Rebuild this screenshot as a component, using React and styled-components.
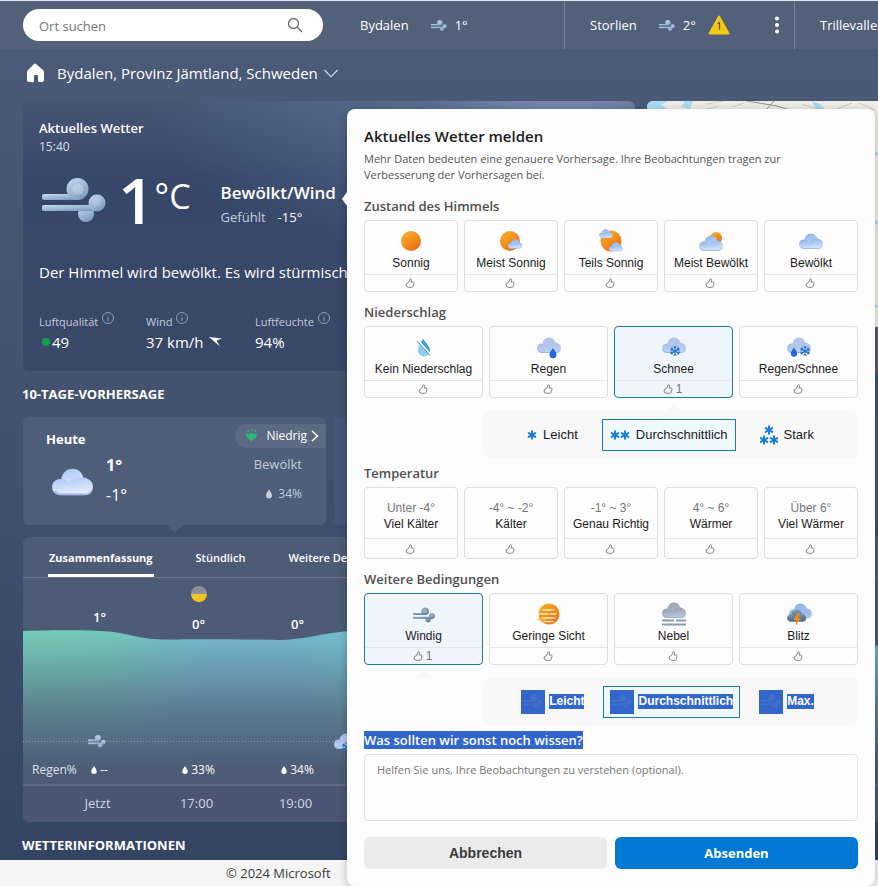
import React, { useId, useState } from 'react'
import styled, { createGlobalStyle } from 'styled-components'

const ui = '"Open Sans", "Noto Sans", sans-serif'
const plain = '"Liberation Sans", Arial, sans-serif'

const GlobalStyle = createGlobalStyle`
    * {
        box-sizing: border-box;
    }
    body {
        margin: 0;
        font-family: ${ui};
        color: #fff;
    }
    button, input, textarea {
        font: inherit;
        color: inherit;
    }
    h1, h2, h3, p {
        margin: 0;
    }
    svg {
        display: block;
        flex-shrink: 0;
    }
`

const Page = styled.div`
    position: relative;
    display: flex;
    flex-direction: column;
    min-height: 100vh;
    overflow: hidden;
    background: linear-gradient(#4b5a78 0, #4a5976 100px, #43536f 370px, #3d4e6d 560px, #344564 860px);
`

/* top bar */

const TopBar = styled.header`
    display: flex;
    height: 49px;
    background: #526079;
    border-top: 1px solid #d9e9f8;
    overflow: hidden;
`

const SearchBox = styled.label`
    display: flex;
    align-items: center;
    flex: 0 0 300px;
    height: 32px;
    margin: 8px 0 0 23px;
    padding: 0 20px 0 16px;
    border-radius: 16px;
    background: #fff;
`

const SearchInput = styled.input`
    flex: 1;
    min-width: 0;
    padding: 2px 0 0;
    border: 0;
    outline: 0;
    background: none;
    color: #444;
    font-size: 13px;
    &::placeholder {
        color: #767676;
        opacity: 1;
    }
`

const Place = styled.div`
    display: flex;
    align-items: center;
    flex: 0 0 ${props => props.$width}px;
    padding: 0 10px 0 ${props => props.$pad}px;
    border-right: 1px solid #7b879c;
    font-size: 13px;
    font-weight: 500;
    white-space: nowrap;
`

const PlaceName = styled.a`
    color: #fff;
    text-decoration: none;
    margin-right: 22px;
`

const PlaceTemp = styled.span`
    margin: 0 12px 0 8px;
`

const MoreButton = styled.button`
    margin-left: auto;
    padding: 0 4px;
    border: 0;
    background: none;
    cursor: pointer;
`

const Location = styled.button`
    display: flex;
    align-items: center;
    align-self: flex-start;
    height: 52px;
    padding: 0 0 4px 24px;
    border: 0;
    background: none;
    font-size: 15px;
    cursor: pointer;
`

const LocationName = styled.span`
    margin: 0 6px 0 11px;
`

/* current weather */

const HeroRow = styled.div`
    display: flex;
    gap: 12px;
    padding-left: 23px;
`

const Current = styled.section`
    flex: 0 0 612px;
    height: 270px;
    padding: 18px 16px;
    border-radius: 6px;
    background:
        radial-gradient(ellipse 420px 200px at 540px -20px, #8494bb 0, rgba(110, 130, 165, 0.5) 35%, rgba(110, 130, 165, 0) 100%),
        linear-gradient(#455674 0, #36476a 80px, #384867 200px, #3a4968);
`

const CurrentTitle = styled.h2`
    font-size: 13px;
    line-height: 18px;
    font-weight: 600;
`

const CurrentTime = styled.p`
    font-size: 12px;
    line-height: 20px;
    color: #d8deea;
`

const Summary = styled.div`
    display: flex;
    align-items: center;
    height: 72px;
    margin: 7px 0 24px 3px;
`

const Degrees = styled.span`
    margin-left: 12px;
    font-size: 64px;
    line-height: 72px;
    font-weight: 600;
`

const Unit = styled.span`
    align-self: flex-start;
    margin-top: 8px;
    font-size: 34px;
    line-height: 48px;
`

const Condition = styled.div`
    margin: 8px 0 0 30px;
`

const ConditionName = styled.p`
    font-size: 17px;
    line-height: 26px;
    font-weight: 600;
`

const Feels = styled.p`
    display: flex;
    gap: 12px;
    font-size: 13px;
    line-height: 22px;
    color: #c6cfde;
`

const FeelsValue = styled.span`
    color: #fff;
`

const Outlook = styled.p`
    font-size: 15px;
    line-height: 24px;
    white-space: nowrap;
`

const Stats = styled.dl`
    display: flex;
    margin: 28px 0 0;
`

const Stat = styled.div`
    flex: 0 0 ${props => props.$width}px;
`

const StatLabel = styled.dt`
    display: flex;
    gap: 4px;
    font-size: 11px;
    line-height: 20px;
    color: #c4ccdb;
`

const StatValue = styled.dd`
    display: flex;
    align-items: center;
    gap: ${props => props.$gap || 5}px;
    margin: 0;
    font-size: 15px;
    line-height: 20px;
`

const Dot = styled.span`
    width: 8px;
    height: 8px;
    margin-left: 3px;
    border-radius: 50%;
    background: #12a150;
`

const MapCard = styled.section`
    display: flex;
    flex-direction: column;
    flex: 1;
    min-width: 0;
    height: 270px;
    border-radius: 6px 0 0 6px;
    overflow: hidden;
    background: #eeece6;
`

const MapBar = styled.div`
    flex: 0 0 44px;
    background: #5a5e62;
`

/* forecast */

const SectionTitle = styled.h2`
    padding-left: 22px;
    font-size: 13px;
    line-height: 46px;
    height: 46px;
    font-weight: 700;
`

const Days = styled.div`
    display: flex;
    gap: 8px;
    padding-left: 23px;
`

const Day = styled.article`
    position: relative;
    display: flex;
    justify-content: space-between;
    flex: 0 0 303px;
    height: 108px;
    padding: 7px 0 0 23px;
    border-radius: 6px;
    background: ${props => (props.$active ? '#4e5e79' : '#465674')};
    &::after {
        content: '';
        display: ${props => (props.$active ? 'block' : 'none')};
        position: absolute;
        top: 100%;
        left: 50%;
        margin-left: -8px;
        border: 8px solid transparent;
        border-top-color: #4e5e79;
        border-bottom-width: 0;
    }
`

const DayName = styled.h3`
    font-size: 13px;
    line-height: 30px;
    font-weight: 700;
`

const DayTemps = styled.div`
    display: flex;
    align-items: center;
    gap: 13px;
    padding-left: 6px;
`

const HighLow = styled.div`
    margin-top: -4px;
    font-size: 16px;
    line-height: 30px;
`

const High = styled.div`
    font-weight: 700;
`

const Low = styled.div`
    font-weight: 500;
`

const DayInfo = styled.div`
    display: flex;
    flex-direction: column;
    align-items: flex-end;
    font-size: 13px;
    line-height: 30px;
    color: #c2cad9;
`

const Pollen = styled.button`
    display: flex;
    align-items: center;
    gap: 8px;
    height: 24px;
    padding: 0 7px 0 10px;
    margin-bottom: 1px;
    border: 0;
    border-radius: 12px 0 0 12px;
    background: #5b6983;
    font-size: 12px;
    line-height: 24px;
    color: #fff;
    cursor: pointer;
`

const PollenLevel = styled.span`
    margin-right: -4px;
`

const DayDetail = styled.div`
    display: flex;
    align-items: center;
    gap: 6px;
    padding-right: 24px;
    font-size: ${props => (props.$small ? 12 : 13)}px;
`

const Panel = styled.section`
    margin: 12px 0 0 23px;
    border-radius: 6px 0 0 6px;
    background: #4d5b76;
    overflow: hidden;
`

const Tabs = styled.div`
    display: flex;
    height: 41px;
    padding-left: 25px;
    border-bottom: 1px solid #68758c;
`

const Tab = styled.button`
    flex-shrink: 0;
    margin-right: 41px;
    padding: 4px 1px 0;
    border: 0;
    border-bottom: 3px solid ${props => (props.$active ? '#fff' : 'transparent')};
    background: none;
    font-size: 11px;
    font-weight: ${props => (props.$active ? 700 : 600)};
    white-space: nowrap;
    cursor: pointer;
`

const Chart = styled.div`
    display: grid;
    height: 208px;
    border-bottom: 2px solid #5d6a84;
    & > * {
        grid-area: 1 / 1;
    }
`

const Hours = styled.div`
    display: flex;
    padding-left: 27px;
    min-width: 0;
    overflow: hidden;
`

const Hour = styled.div`
    display: flex;
    flex-direction: column;
    justify-content: space-between;
    align-items: center;
    flex: 0 0 99px;
    padding: ${props => props.$top}px 0 4px;
    font-size: 13px;
    line-height: 20px;
    font-weight: 600;
`

const Rain = styled.span`
    display: flex;
    align-items: center;
    gap: 3px;
    font-size: 12px;
    font-weight: 500;
`

const RainLabel = styled.span`
    align-self: end;
    justify-self: start;
    padding: 0 0 4px 9px;
    font-size: 12px;
    line-height: 20px;
    color: #dde3ee;
`

const Times = styled.div`
    display: flex;
    height: 36px;
    padding-left: 25px;
    background: #4a5674;
`

const Time = styled.span`
    flex: 0 0 99px;
    text-align: center;
    font-size: 13px;
    line-height: 34px;
    color: #cfd6e2;
`

const Footer = styled.footer`
    flex: 1;
    min-height: 26px;
    margin-top: -8px;
    padding-left: 226px;
    background: #f5f5f5;
    color: #3b3b3b;
    font-size: 13px;
    line-height: 26px;
`

/* report dialog */

const Dialog = styled.form`
    position: absolute;
    top: 109px;
    right: 3px;
    width: 528px;
    max-width: 100%;
    padding: 17px;
    border-radius: 8px;
    background: #fdfdfd;
    color: #1b1b1b;
    box-shadow: 0 2px 8px rgba(0, 0, 0, 0.25);
    &::before {
        content: '';
        position: absolute;
        top: 83px;
        left: -5px;
        border: 7px solid transparent;
        border-left-width: 0;
        border-right: 5px solid #fdfdfd;
    }
`

const DialogTitle = styled.h1`
    font-size: 15px;
    line-height: 20px;
    font-weight: 600;
`

const DialogText = styled.p`
    margin: 5px 0 13px;
    padding-right: 50px;
    font-size: 11px;
    line-height: 16px;
    color: #555;
`

const GroupTitle = styled.h2`
    margin-bottom: 4px;
    font-size: 13px;
    line-height: 20px;
    font-weight: 600;
    color: #4f4f4f;
`

const Tiles = styled.div`
    display: flex;
    gap: 6px;
    margin-bottom: ${props => (props.$open ? 13 : 10)}px;
`

const TileButton = styled.button`
    position: relative;
    display: flex;
    flex-direction: column;
    flex: 1 1 0;
    min-width: 0;
    height: 72px;
    padding: 0;
    border: 1px solid ${props => (props.$active ? '#1b7c9b' : '#dedede')};
    border-radius: 4px;
    background: ${props => (props.$active ? '#eef6fb' : '#fdfdfd')};
    font-family: ${plain};
    font-size: 12px;
    line-height: 16px;
    cursor: pointer;
    &::after {
        content: '';
        display: ${props => (props.$active ? 'block' : 'none')};
        position: absolute;
        top: calc(100% + 6px);
        left: 50%;
        margin-left: -8px;
        border: 8px solid transparent;
        border-top-width: 0;
        border-bottom-color: #f8f8f8;
    }
`

const TileBody = styled.span`
    display: flex;
    flex-direction: column;
    align-items: center;
    justify-content: flex-end;
    flex: 1;
    width: 100%;
    padding-bottom: ${props => (props.$text ? 6 : 3)}px;
    border-bottom: 1px solid #e6e6e6;
    white-space: nowrap;
`

const TileRange = styled.span`
    color: #767676;
`

const TileVotes = styled.span`
    display: flex;
    align-items: center;
    justify-content: center;
    gap: 3px;
    width: 100%;
    height: ${props => (props.$text ? 19 : 16)}px;
    padding-right: 2px;
    color: #767676;
`

const Options = styled.div`
    display: flex;
    align-items: center;
    justify-content: center;
    gap: ${props => props.$gap}px;
    height: 47px;
    margin: 0 0 5px 119px;
    padding-right: ${props => props.$shift}px;
    border-radius: 8px;
    background: #f8f8f8;
`

const Option = styled.button`
    display: flex;
    align-items: center;
    gap: ${props => (props.$marked ? 4 : 6)}px;
    height: 32px;
    padding: 0 ${props => (props.$marked ? 6 : 7)}px;
    border: 1px solid ${props => (props.$active ? '#1b7c9b' : 'transparent')};
    background: ${props => (props.$active ? '#f0f9fd' : 'transparent')};
    font-family: ${plain};
    font-size: ${props => (props.$marked ? 12 : 13)}px;
    font-weight: ${props => (props.$marked ? 700 : 400)};
    cursor: pointer;
`

const Marked = styled.mark`
    background: #3366cc;
    color: #fff;
    line-height: 15px;
`

const MarkedIcon = styled.span`
    display: flex;
    align-items: center;
    justify-content: center;
    width: 24px;
    height: 24px;
    background: #3366cc;
`

const NoteLabel = styled.label`
    display: block;
    margin-bottom: 4px;
    font-size: 13px;
    line-height: 20px;
    font-weight: 600;
`

const NoteBox = styled.textarea`
    display: block;
    width: 100%;
    height: 67px;
    margin-bottom: 16px;
    padding: 7px 12px;
    border: 1px solid #e3e3e3;
    border-radius: 4px;
    background: #fdfdfd;
    font-size: 11px;
    line-height: 16px;
    resize: none;
    outline: 0;
    &::placeholder {
        color: #767676;
        opacity: 1;
    }
`

const Actions = styled.div`
    display: flex;
    gap: 8px;
`

const ActionButton = styled.button`
    flex: 1;
    height: 32px;
    border: 0;
    border-radius: 6px;
    background: ${props => (props.$primary ? '#0078d4' : '#ebebeb')};
    color: ${props => (props.$primary ? '#fff' : '#3b3b3b')};
    font-family: ${props => (props.$primary ? ui : plain)};
    font-size: ${props => (props.$primary ? 13 : 14)}px;
    font-weight: 700;
    cursor: pointer;
`

/* icons */

const WindIcon = ({ width = 16, dark, ...rest }) => {
    const id = useId()
    return (
        <svg width={width} height={width * 44 / 64} viewBox="0 0 64 44" {...rest}>
            <defs>
                <linearGradient id={id} x1="0" y1="0" x2="0.6" y2="1">
                    <stop offset="0" stopColor={dark ? '#9cb9d1' : '#c8dcf4'} />
                    <stop offset="1" stopColor={dark ? '#64819c' : '#7f9dc0'} />
                </linearGradient>
            </defs>
            <g fill={`url(#${id})`}>
                <circle cx="44" cy="36" r="8" />
                <path d="M2.5 27H56v6H2.5a3 3 0 0 1 0-6z" />
                <circle cx="55" cy="25" r="8.5" />
                <path d="M2.5 16H36v6H2.5a3 3 0 0 1 0-6z" />
                <circle cx="35.5" cy="11" r="11" />
            </g>
            <circle cx="36" cy="11" r="5.5" fill="#fff" opacity="0.25" />
            <circle cx="55" cy="24" r="4" fill="#fff" opacity="0.15" />
        </svg>
    )
}

const Cloud = ({ x = 0, y = 0, scale = 1, top = '#7fa9ea', bottom = '#d4e6fb' }) => {
    const id = useId()
    return (
        <g transform={`translate(${x} ${y}) scale(${scale})`}>
            <defs>
                <linearGradient id={id} x1="0" y1="0" x2="0.3" y2="1">
                    <stop offset="0" stopColor={top} />
                    <stop offset="1" stopColor={bottom} />
                </linearGradient>
            </defs>
            <circle cx="12" cy="7" r="6.5" fill={`url(#${id})`} />
            <path d="M5 6.5C7.5 6.5 9 7.5 10 8.5c1.5-2 4-3 6.500-3C21 5.500 24 7.500 24 11s-2 5-5 5H5c-3 0-5-2-5-4.800S2 6.500 5 6.500z" fill={`url(#${id})`} />
            <path d="M1.500 13.500c1 1.500 2.200 2 3.500 2h14c2 0 3.500-1 4.300-2.500" stroke="#7c9fe6" strokeWidth="0.8" fill="none" opacity="0.7" />
        </g>
    )
}

const Sun = ({ cx, cy, r }) => {
    const id = useId()
    return (
        <g>
            <defs>
                <linearGradient id={id} x1="0.1" y1="0" x2="0.8" y2="1">
                    <stop offset="0" stopColor="#f7b32b" />
                    <stop offset="1" stopColor="#ec6a12" />
                </linearGradient>
            </defs>
            <circle cx={cx} cy={cy} r={r} fill={`url(#${id})`} />
        </g>
    )
}

const Flake = ({ x, y, r, color = '#1c7fd6', width = 1.4 }) => (
    <g transform={`translate(${x} ${y})`} stroke={color} strokeWidth={width} strokeLinecap="round">
        {[0, 60, 120].map(a => <path key={a} transform={`rotate(${a})`} d={`M0 ${-r}V${r}`} />)}
    </g>
)

const FineFlake = ({ x, y }) => (
    <g transform={`translate(${x} ${y})`} stroke="#1b6fd0" strokeWidth="1" fill="none">
        {[0, 60, 120, 180, 240, 300].map(a => <path key={a} transform={`rotate(${a})`} d="M0 0V-5M-1.500 -4.500L0 -3L1.500 -4.500" />)}
    </g>
)

const Drop = ({ x, y, color = '#2466dd', scale = 1 }) => (
    <path transform={`translate(${x} ${y}) scale(${scale})`} d="M0 -5C1.500 -2.500 3.500 -.5 3.500 1.800a3.500 3.500 0 0 1-7 0C-3.500 -.5-1.500-2.500 0-5z" fill={color} />
)

const drawings = {
    sunny: <Sun cx={14} cy={12} r={10} />,
    mostlySunny: <><Sun cx={13} cy={12} r={10} /><Cloud x={11} y={10} scale={0.6} /></>,
    partlySunny: <><Sun cx={14} cy={12} r={10.500} /><Cloud x={2} y={0} scale={0.56} /><Cloud x={12} y={13} scale={0.58} /></>,
    mostlyCloudy: <><Sun cx={19} cy={9} r={6} /><Cloud x={2} y={6} top="#86adec" /></>,
    cloudy: <Cloud x={2} y={4} />,
    dry: (
        <>
            <path d="M13 4c3 4 7 8 7 11.500a6 6 0 0 1-12 0c0-4 2-7.500 5-11.500z" fill="#8fcdf2" />
            <path d="M13 4c3 4 7 8 7 11.500 0 1-.2 2-.6 2.700L11 7.500c.5-1.200 1.200-2.300 2-3.500z" fill="#3f9cd8" />
            <path d="M7.500 5l13 14.500" stroke="#fff" strokeWidth="2" />
            <path d="M7 6l13 14.500" stroke="#3c8fc6" strokeWidth="1" />
        </>
    ),
    rain: <><Cloud x={2} y={2} top="#a9bbe6" bottom="#bdd2f5" /><Drop x={18} y={18} /></>,
    snow: <><Cloud x={2} y={2} top="#a9bbe6" bottom="#bdd2f5" /><FineFlake x={15} y={16} /></>,
    sleet: <><Cloud x={2} y={2} top="#a9bbe6" bottom="#bdd2f5" /><Drop x={9} y={17} scale={0.9} /><FineFlake x={20} y={16} /></>,
    haze: (
        <>
            <Sun cx={14} cy={12} r={10.500} />
            <path d="M8 8h11M4 12h9M15 12h6M7 16h13M9 19.500h9" stroke="#fde9b0" strokeWidth="1.300" strokeLinecap="round" />
            <path d="M2.500 17.800h8" stroke="#f5b63c" strokeWidth="1.300" strokeLinecap="round" />
        </>
    ),
    fog: (
        <>
            <Cloud x={2} y={0} top="#8f9bab" bottom="#bcc6d3" />
            <path d="M2 18.500h12M16 18.500h10M2 22.500h24" stroke="#8a9cb0" strokeWidth="1.800" />
        </>
    ),
    storm: (
        <>
            <Cloud x={4} y={1} scale={0.95} top="#8fb3ee" bottom="#a9c4ef" />
            <Cloud x={2} y={7} scale={0.8} top="#8ba0b8" bottom="#4e6680" />
            <path d="M12.500 11l-4 7h3l-1 6 5.500-8h-3l2-5z" fill="#f28a1c" />
        </>
    ),
}

const WeatherIcon = ({ name }) => (
    <svg width="28" height="26" viewBox="0 0 28 26">{drawings[name]}</svg>
)

const ThumbIcon = () => (
    <svg width="10" height="10" viewBox="0 0 10 10" fill="none" stroke="#777" strokeWidth="0.900" strokeLinejoin="round">
        <path d="M5.200.8c1-.2 1.500.6 1.300 1.500L6 4h2c.8 0 1.200.6 1 1.300l-.8 3c-.2.700-.7 1-1.300 1H3.500L1.500 8.500 1 6l2.500-1.500z" />
    </svg>
)

const InfoIcon = () => (
    <svg width="12" height="12" viewBox="0 0 12 12" fill="none" stroke="#93a0b6">
        <circle cx="6" cy="6" r="5.500" />
        <path d="M6 5v4M6 3v1" />
    </svg>
)

const DropIcon = ({ color = '#fff', size = 8 }) => (
    <svg width="6" height={size} viewBox="-3.500 -5 7 10.300">
        <Drop x={0} y={0} color={color} />
    </svg>
)

/* data */

const sky = [
    { label: 'Sonnig', icon: 'sunny' },
    { label: 'Meist Sonnig', icon: 'mostlySunny' },
    { label: 'Teils Sonnig', icon: 'partlySunny' },
    { label: 'Meist Bewölkt', icon: 'mostlyCloudy' },
    { label: 'Bewölkt', icon: 'cloudy' },
]

const precipitation = [
    { label: 'Kein Niederschlag', icon: 'dry' },
    { label: 'Regen', icon: 'rain' },
    { label: 'Schnee', icon: 'snow' },
    { label: 'Regen/Schnee', icon: 'sleet' },
]

const temperature = [
    { label: 'Viel Kälter', range: 'Unter -4°' },
    { label: 'Kälter', range: '-4° ~ -2°' },
    { label: 'Genau Richtig', range: '-1° ~ 3°' },
    { label: 'Wärmer', range: '4° ~ 6°' },
    { label: 'Viel Wärmer', range: 'Über 6°' },
]

const conditions = [
    { label: 'Windig', icon: 'wind' },
    { label: 'Geringe Sicht', icon: 'haze' },
    { label: 'Nebel', icon: 'fog' },
    { label: 'Blitz', icon: 'storm' },
]

const hours = [
    { time: 'Jetzt', temp: '1°', rain: '--', top: 29 },
    { time: '17:00', temp: '0°', rain: '33%', top: 36 },
    { time: '19:00', temp: '0°', rain: '34%', top: 36 },
]

const snowLevels = [
    { label: 'Leicht', width: 10, flakes: [[5, 12]] },
    { label: 'Durchschnittlich', width: 20, flakes: [[5, 12], [15, 12]] },
    { label: 'Stark', width: 18, flakes: [[9, 7], [4, 17], [14, 17]] },
]

const TileGroup = ({ items, value, onChange, open }) => (
    <Tiles $open={open}>
        {items.map(({ label, icon, range }) => {
            const active = value === label
            return (
                <TileButton key={label} type="button" $active={active} aria-pressed={active} onClick={() => onChange(label)}>
                    <TileBody $text={!!range}>
                        {range && <TileRange>{range}</TileRange>}
                        {icon === 'wind' && <WindIcon width={22} height={26} dark />}
                        {icon && icon !== 'wind' && <WeatherIcon name={icon} />}
                        <span>{label}</span>
                    </TileBody>
                    <TileVotes $text={!!range}>
                        <ThumbIcon />
                        {active && <span>1</span>}
                    </TileVotes>
                </TileButton>
            )
        })}
    </Tiles>
)

const ReportDialog = () => {
    const [skyValue, setSky] = useState('')
    const [rainValue, setRain] = useState('Schnee')
    const [tempValue, setTemp] = useState('')
    const [otherValue, setOther] = useState('Windig')
    const [snowLevel, setSnowLevel] = useState('Durchschnittlich')
    const [windLevel, setWindLevel] = useState('Durchschnittlich')

    return (
        <Dialog onSubmit={e => e.preventDefault()}>
            <DialogTitle>Aktuelles Wetter melden</DialogTitle>
            <DialogText>
                Mehr Daten bedeuten eine genauere Vorhersage. Ihre Beobachtungen tragen zur Verbesserung der Vorhersagen bei.
            </DialogText>
            <GroupTitle>Zustand des Himmels</GroupTitle>
            <TileGroup items={sky} value={skyValue} onChange={setSky} />
            <GroupTitle>Niederschlag</GroupTitle>
            <TileGroup items={precipitation} value={rainValue} onChange={setRain} open />
            <Options $gap={16} $shift={0}>
                {snowLevels.map(({ label, width, flakes }) => (
                    <Option key={label} type="button" $active={snowLevel === label} onClick={() => setSnowLevel(label)}>
                        <svg width={width} height="24" viewBox={`0 0 ${width} 24`}>
                            {flakes.map(([x, y]) => <Flake key={x} x={x} y={y} r={3.800} width={2} />)}
                        </svg>
                        {label}
                    </Option>
                ))}
            </Options>
            <GroupTitle>Temperatur</GroupTitle>
            <TileGroup items={temperature} value={tempValue} onChange={setTemp} />
            <GroupTitle>Weitere Bedingungen</GroupTitle>
            <TileGroup items={conditions} value={otherValue} onChange={setOther} open />
            <Options $gap={12} $shift={6}>
                {['Leicht', 'Durchschnittlich', 'Max.'].map(label => (
                    <Option key={label} type="button" $marked $active={windLevel === label} onClick={() => setWindLevel(label)}>
                        <MarkedIcon><WindIcon width={20} opacity="0.2" dark /></MarkedIcon>
                        <Marked>{label}</Marked>
                    </Option>
                ))}
            </Options>
            <NoteLabel htmlFor="note"><Marked>Was sollten wir sonst noch wissen?</Marked></NoteLabel>
            <NoteBox id="note" placeholder="Helfen Sie uns, Ihre Beobachtungen zu verstehen (optional)." />
            <Actions>
                <ActionButton type="button">Abbrechen</ActionButton>
                <ActionButton type="submit" $primary>Absenden</ActionButton>
            </Actions>
        </Dialog>
    )
}

const ForecastChart = () => (
    <svg width="100%" height="206">
        <defs>
            <linearGradient id="hue" gradientUnits="userSpaceOnUse" x1="0" y1="0" x2="340" y2="0">
                <stop offset="0" stopColor="#76d0b8" />
                <stop offset="0.25" stopColor="#76ccbc" />
                <stop offset="0.55" stopColor="#78bcd2" />
                <stop offset="0.8" stopColor="#78bcd2" />
                <stop offset="1" stopColor="#74c6cb" />
            </linearGradient>
            <linearGradient id="fade" x1="0" y1="0" x2="0" y2="1">
                <stop offset="0" stopColor="#fff" />
                <stop offset="0.6" stopColor="#fff" stopOpacity="0.32" />
                <stop offset="1" stopColor="#fff" stopOpacity="0.02" />
            </linearGradient>
            <mask id="fadeMask" maskUnits="userSpaceOnUse" x="0" y="50" width="900" height="140">
                <rect x="0" y="50" width="900" height="140" fill="url(#fade)" />
            </mask>
        </defs>
        <path
            d="M0 53C40 52 65 52 85 53.500C105 55 115 61 140 61.500C170 61 220 61 255 62C280 62 300 55 330 52.500C450 45 600 68 900 68V190H0z"
            fill="url(#hue)"
            mask="url(#fadeMask)"
        />
        <path d="M0 163.500H900" stroke="#8fa0b4" strokeDasharray="1 2" />
        <path d="M168 16a8 8 0 0 1 16 0z" fill="#8b909b" />
        <path d="M168 16a8 8 0 0 0 16 0z" fill="#f5c51f" />
        <WindIcon width={18} x="65" y="157" />
        <svg x="309" y="153" width="28" height="26">{drawings.snow}</svg>
    </svg>
)

const App = () => {
    return (
        <Page>
            <GlobalStyle />
            <TopBar>
                <SearchBox>
                    <SearchInput type="search" placeholder="Ort suchen" aria-label="Ort suchen" />
                    <svg width="16" height="16" viewBox="0 0 16 16" fill="none" stroke="#6e6e6e" strokeWidth="1.300">
                        <circle cx="6.500" cy="6.500" r="5" />
                        <path d="M10.200 10.200L15 15" />
                    </svg>
                </SearchBox>
                <Place $width={242} $pad={37}>
                    <PlaceName href="#bydalen">Bydalen</PlaceName>
                    <WindIcon />
                    <PlaceTemp>1°</PlaceTemp>
                </Place>
                <Place $width={230} $pad={25}>
                    <PlaceName href="#storlien">Storlien</PlaceName>
                    <WindIcon />
                    <PlaceTemp>2°</PlaceTemp>
                    <svg width="22" height="20" viewBox="0 0 22 20">
                        <path d="M11 1.500L20.500 18.500H1.500z" fill="#f2c811" stroke="#f2c811" strokeWidth="2" strokeLinejoin="round" />
                        <text x="11" y="15" fontSize="10" textAnchor="middle" fill="#222">1</text>
                    </svg>
                    <MoreButton aria-label="Mehr">
                        <svg width="6" height="18" viewBox="0 0 6 18" fill="#fff">
                            <circle cx="3" cy="2.500" r="2" />
                            <circle cx="3" cy="9" r="2" />
                            <circle cx="3" cy="15.500" r="2" />
                        </svg>
                    </MoreButton>
                </Place>
                <Place $width={230} $pad={25}>
                    <PlaceName href="#trillevallen">Trillevallen</PlaceName>
                </Place>
            </TopBar>
            <Location>
                <svg width="22" height="24" viewBox="0 0 22 24">
                    <path d="M11 2.500a1.500 1.500 0 0 1 1 .4l7 6c.6.500 1 1.200 1 2V19a2 2 0 0 1-2 2h-2.500a1.500 1.500 0 0 1-1.500-1.500V15a1 1 0 0 0-1-1h-2a1 1 0 0 0-1 1v4.500A1.500 1.500 0 0 1 7.500 21H5a2 2 0 0 1-2-2v-8c0-.8.3-1.500 1-2l6-6.100a1.500 1.500 0 0 1 1-.4z" fill="#fff" />
                </svg>
                <LocationName>Bydalen, Provinz Jämtland, Schweden</LocationName>
                <svg width="14" height="9" viewBox="0 0 14 9" fill="none" stroke="#dfe5ef" strokeWidth="1.100">
                    <path d="M.5 1L7 7.800L13.500 1" />
                </svg>
            </Location>
            <HeroRow>
                <Current>
                    <CurrentTitle>Aktuelles Wetter</CurrentTitle>
                    <CurrentTime>15:40</CurrentTime>
                    <Summary>
                        <WindIcon width={64} />
                        <Degrees>1</Degrees>
                        <Unit>°C</Unit>
                        <Condition>
                            <ConditionName>Bewölkt/Wind</ConditionName>
                            <Feels>Gefühlt <FeelsValue>-15°</FeelsValue></Feels>
                        </Condition>
                    </Summary>
                    <Outlook>Der Himmel wird bewölkt. Es wird stürmisch.</Outlook>
                    <Stats>
                        <Stat $width={107}>
                            <StatLabel>Luftqualität <InfoIcon /></StatLabel>
                            <StatValue $gap={2}><Dot />49</StatValue>
                        </Stat>
                        <Stat $width={109}>
                            <StatLabel>Wind <InfoIcon /></StatLabel>
                            <StatValue>
                                37 km/h
                                <svg width="14" height="10" viewBox="0 0 14 10"><path d="M0 0L13 1.500L7.500 3.500L11 9.500z" fill="#fff" /></svg>
                            </StatValue>
                        </Stat>
                        <Stat $width={100}>
                            <StatLabel>Luftfeuchte <InfoIcon /></StatLabel>
                            <StatValue>94%</StatValue>
                        </Stat>
                    </Stats>
                </Current>
                <MapCard>
                    <svg width="100%" height="226" viewBox="0 0 231 226" preserveAspectRatio="none" fill="none">
                        <path d="M0 0h20l-6 4 10 6H0zM38 0h8l-3 8-9-2zM165 0l8 3 6 6h-10z" fill="#a9dcf0" />
                        <path d="M60 3l16-3M85 6l12-4M52 10l20-5M155 3l16 5M190 8l15-6M212 2l16 7" stroke="#cfccc4" />
                        <path d="M100 0l30 5 20 6M119 9l8-9" stroke="#8d8f8c" />
                        <path d="M226 50l5 4M228 120l3 3M226 205h5" stroke="#9bd3ea" strokeWidth="2" />
                    </svg>
                    <MapBar />
                </MapCard>
            </HeroRow>
            <SectionTitle>10-TAGE-VORHERSAGE</SectionTitle>
            <Days>
                <Day $active>
                    <div>
                        <DayName>Heute</DayName>
                        <DayTemps>
                            <svg width="41" height="28" viewBox="0 0 24 16.500">
                                <Cloud top="#a9c4f6" bottom="#e3edfc" />
                            </svg>
                            <HighLow>
                                <High>1°</High>
                                <Low>-1°</Low>
                            </HighLow>
                        </DayTemps>
                    </div>
                    <DayInfo>
                        <Pollen>
                            <svg width="13" height="16" viewBox="0 0 13 16" fill="#2bb673">
                                <path d="M1 5.500c2 0 3 .2 3.500.8L6.500 4.500l2 1.800C9 5.700 10 5.500 12 5.500c0 3-1.500 5.500-4 5.800L7 14H6l-1-2.700C2.500 11 1 8.500 1 5.500z" />
                                <circle cx="3" cy="3" r="0.900" />
                                <circle cx="6.500" cy="1.800" r="0.900" />
                                <circle cx="10" cy="3" r="0.900" />
                            </svg>
                            <PollenLevel>Niedrig</PollenLevel>
                            <svg width="8" height="12" viewBox="0 0 8 12" fill="none" stroke="#fff" strokeWidth="1.500">
                                <path d="M1 1l5.500 5L1 11" />
                            </svg>
                        </Pollen>
                        <DayDetail>Bewölkt</DayDetail>
                        <DayDetail $small><DropIcon color="#c8d1dd" size={10} />34%</DayDetail>
                    </DayInfo>
                </Day>
                <Day />
                <Day />
            </Days>
            <Panel>
                <Tabs role="tablist">
                    <Tab role="tab" $active aria-selected>Zusammenfassung</Tab>
                    <Tab role="tab">Stündlich</Tab>
                    <Tab role="tab">Weitere Details</Tab>
                </Tabs>
                <Chart>
                    <ForecastChart />
                    <Hours>
                        {hours.map(({ time, temp, rain, top }) => (
                            <Hour key={time} $top={top}>
                                <span>{temp}</span>
                                <Rain><DropIcon />{rain}</Rain>
                            </Hour>
                        ))}
                    </Hours>
                    <RainLabel>Regen%</RainLabel>
                </Chart>
                <Times>
                    {hours.map(({ time }) => <Time key={time}>{time}</Time>)}
                </Times>
            </Panel>
            <SectionTitle>WETTERINFORMATIONEN</SectionTitle>
            <Footer>© 2024 Microsoft</Footer>
            <ReportDialog />
        </Page>
    )
}

export default App
